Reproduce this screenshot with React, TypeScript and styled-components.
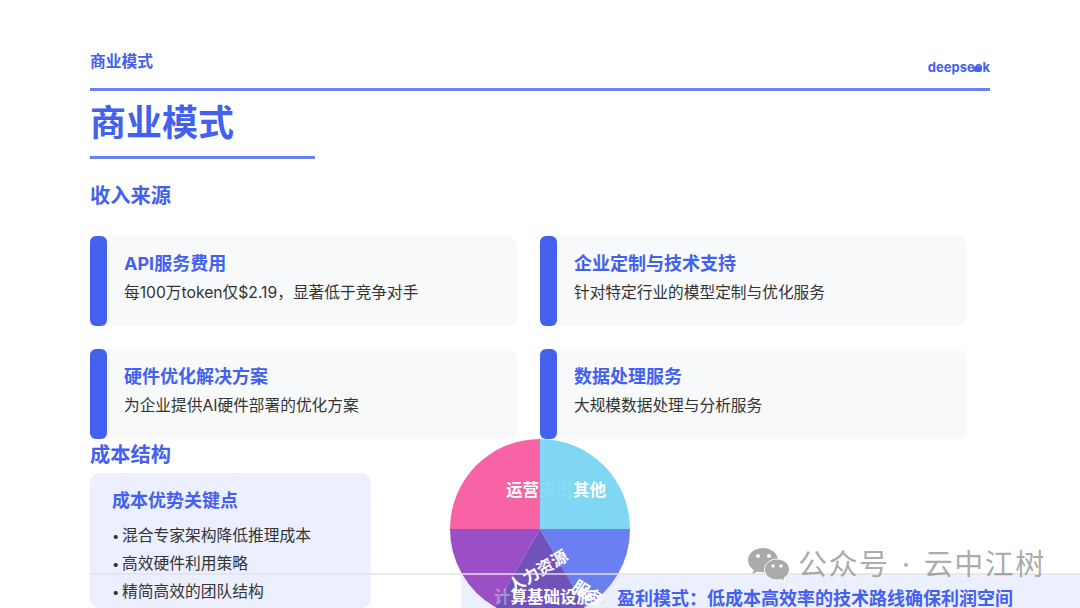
import React from "react";
import styled, { createGlobalStyle } from "styled-components";

const Global = createGlobalStyle`
  html, body { margin: 0; padding: 0; background: #fff; }
  body { font-family: "Inter", "Liberation Sans", "Noto Sans CJK SC", sans-serif; }
`;

const Slide = styled.div`
  position: relative;
  width: 1080px;
  height: 608px;
  overflow: hidden;
  background: #fff;
  box-sizing: border-box;
  padding: 55px 90px 0;
`;

const TopBar = styled.header`
  display: flex;
  justify-content: space-between;
  align-items: flex-end;
  height: 36px;
  box-sizing: border-box;
  padding-bottom: 15px;
  border-bottom: 3px solid #6a80f5;
`;

const Crumb = styled.div`
  font-size: 15.75px;
  line-height: 20px;
  font-weight: 700;
  color: #4361ee;
  margin-bottom: 1px;
`;

const Logo = styled.div`
  position: relative;
  font-size: 13px;
  line-height: 16px;
  font-weight: 700;
  color: #4361ee;
  margin-bottom: -2px;
`;

const LogoDot = styled.span`
  position: absolute;
  right: 8px;
  top: 7px;
  width: 9px;
  height: 6px;
  border-radius: 50%;
  background: #4361ee;
`;

const Title = styled.h1`
  margin: 9px 0 0;
  font-size: 36px;
  line-height: 46px;
  font-weight: 700;
  color: #4361ee;
`;

const TitleRule = styled.div`
  width: 225px;
  height: 3px;
  margin-top: 10px;
  background: #6a80f5;
`;

const SectionTitle = styled.h2`
  margin: 0;
  font-size: 20.25px;
  line-height: 26px;
  font-weight: 700;
  color: #4361ee;
`;

const Revenue = styled.section`
  margin-top: 24px;
`;

const CardGrid = styled.div`
  display: grid;
  grid-template-columns: 427px 427px;
  column-gap: 23px;
  row-gap: 23px;
  margin-top: 27px;
`;

const Card = styled.div`
  height: 90px;
  box-sizing: border-box;
  padding: 16px 10px 0 34px;
  background: #f8f9fa;
  border-radius: 10px;
  position: relative;
`;

const CardAccent = styled.span`
  position: absolute;
  left: 0;
  top: 0;
  bottom: 0;
  width: 17px;
  border-radius: 6px;
  background: #4361ee;
`;

const CardTitle = styled.div`
  font-size: 18px;
  line-height: 24px;
  font-weight: 700;
  color: #4361ee;
`;

const CardText = styled.div`
  margin-top: 7px;
  font-size: 15.7px;
  line-height: 20px;
  color: #333;
`;

const Cost = styled.section`
  margin-top: 3px;
`;

const CostPanel = styled.div`
  width: 281px;
  height: 135px;
  margin-top: 5px;
  box-sizing: border-box;
  padding: 16px 22px 0;
  border-radius: 10px;
  background: #ebefff;
`;

const PanelTitle = styled.div`
  font-size: 18px;
  line-height: 24px;
  font-weight: 700;
  color: #4361ee;
`;

const PointList = styled.ul`
  list-style: none;
  margin: 9px 0 0;
  padding: 0;
`;

const Point = styled.li`
  font-size: 15.75px;
  line-height: 28px;
  color: #333;
  white-space: nowrap;
  &::before {
    content: "•";
    display: inline-block;
    width: 10px;
    font-size: 13px;
  }
`;

const Pie = styled.svg`
  position: absolute;
  left: 450px;
  top: 439px;
  width: 180px;
  height: 180px;
`;

const PieLabel = styled.text`
  font-size: 16.5px;
  font-weight: 700;
  fill: #fff;
`;

const Footer = styled.div`
  position: absolute;
  left: 461px;
  right: 0;
  top: 574px;
  height: 34px;
  box-sizing: border-box;
  padding: 13px 0 0 156px;
  background: #ebefff;
  font-size: 18px;
  line-height: 24px;
  font-weight: 700;
  color: #4361ee;
  white-space: nowrap;
`;

const FooterLine = styled.div`
  position: absolute;
  left: 90px;
  right: 0;
  top: 573px;
  height: 2px;
  background: rgba(225, 225, 232, 0.75);
`;

const Watermark = styled.div`
  position: absolute;
  left: 748px;
  top: 547px;
  display: flex;
  align-items: center;
  gap: 8px;
  font-size: 29px;
  line-height: 36px;
  letter-spacing: 1.5px;
  word-spacing: 2.5px;
  color: rgba(130, 130, 130, 0.68);
  white-space: nowrap;
`;

const WeChat = () => (
  <svg width="42" height="34" viewBox="0 0 42 34">
    <path d="M15 0C6.700 0 0 5.500 0 12.300c0 3.900 2.200 7.300 5.600 9.600L4.500 26l4.900-2.500c1.700.5 3.600.8 5.600.8 8.300 0 15-5.400 15-12S23.300 0 15 0z" fill="#aaa" />
    <path d="M41.500 21.500C41.500 15.700 36 11 29 11s-12.500 4.700-12.500 10.500S22 32 29 32c1.500 0 2.900-.2 4.200-.6l3.600 2.300-.9-3.600c3.400-1.900 5.600-5.200 5.600-8.600z" fill="#aaa" stroke="#fff" strokeWidth="1" />
    <circle cx="10" cy="8" r="2" fill="#fff" />
    <circle cx="21" cy="8" r="2" fill="#fff" />
    <circle cx="25" cy="18" r="1.700" fill="#fff" />
    <circle cx="33" cy="18" r="1.700" fill="#fff" />
  </svg>
);

const revenue = [
  { title: "API服务费用", text: "每100万token仅$2.19，显著低于竞争对手" },
  { title: "企业定制与技术支持", text: "针对特定行业的模型定制与优化服务" },
  { title: "硬件优化解决方案", text: "为企业提供AI硬件部署的优化方案" },
  { title: "数据处理服务", text: "大规模数据处理与分析服务" },
];

const points = ["混合专家架构降低推理成本", "高效硬件利用策略", "精简高效的团队结构"];

export default function App() {
  return (
    <Slide>
      <Global />
      <TopBar>
        <Crumb>商业模式</Crumb>
        <Logo>
          deepseek
          <LogoDot />
        </Logo>
      </TopBar>
      <Title>商业模式</Title>
      <TitleRule />
      <Revenue>
        <SectionTitle>收入来源</SectionTitle>
        <CardGrid>
          {revenue.map((r) => (
            <Card key={r.title}>
              <CardAccent />
              <CardTitle>{r.title}</CardTitle>
              <CardText>{r.text}</CardText>
            </Card>
          ))}
        </CardGrid>
      </Revenue>
      <Cost>
        <SectionTitle>成本结构</SectionTitle>
        <CostPanel>
          <PanelTitle>成本优势关键点</PanelTitle>
          <PointList>
            {points.map((p) => (
              <Point key={p}>{p}</Point>
            ))}
          </PointList>
        </CostPanel>
      </Cost>

      <Footer>盈利模式：低成本高效率的技术路线确保利润空间</Footer>
      <Pie viewBox="0 0 180 180">
        <path d="M90 90V0A90 90 0 0 0 0 90z" fill="#f863a6" />
        <path d="M90 90V0A90 90 0 0 1 180 90z" fill="#7fd7f4" />
        <path d="M90 90H0A90 90 0 0 0 45 168z" fill="#9b4fc6" />
        <path d="M90 90H180A90 90 0 0 1 135 168z" fill="#6a80f0" />
        <path d="M90 90L45 168A90 90 0 0 0 135 168z" fill="#7152ba" />
        <PieLabel x="56" y="57">
          运营<tspan fillOpacity="0.1">支出</tspan>
        </PieLabel>
        <PieLabel x="123" y="57">其他</PieLabel>
        <PieLabel x="88" y="138" textAnchor="middle" transform="rotate(-31 88 132)">
          人力资源
        </PieLabel>
        <PieLabel x="44" y="164">
          <tspan fillOpacity="0.35">计</tspan>算基础设施
        </PieLabel>
        <PieLabel x="138" y="160" textAnchor="middle" transform="rotate(32 138 154)">
          服务
        </PieLabel>
      </Pie>
      <FooterLine />
      <Watermark>
        <WeChat />
        公众号 · 云中江树
      </Watermark>
    </Slide>
  );
}
